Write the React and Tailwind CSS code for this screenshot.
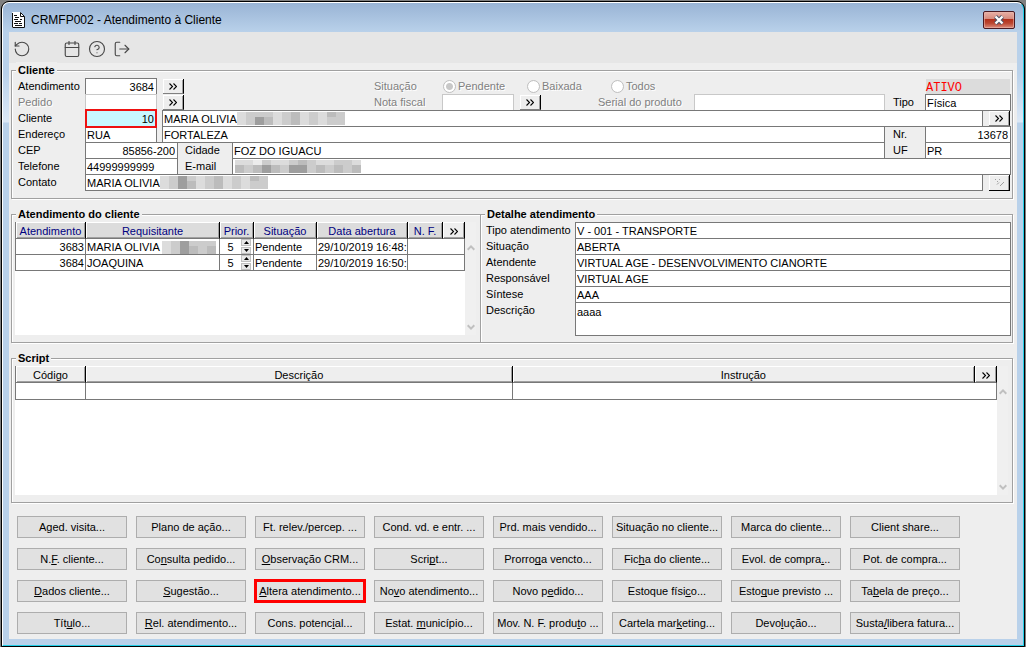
import { useState } from "react";
import { Calendar, CircleHelp, LogOut, RotateCcw } from "lucide-react";

const GROUP =
  "min-w-0 border border-[#a0a0a0] shadow-[1px_1px_0_#fff,inset_1px_1px_0_#fff]";
const LEGEND = "ml-1 h-4 bg-[#eeeeee] px-0.5 font-bold leading-4";
const FIELD = "h-[17px] min-w-0 rounded-none border border-[#787878] bg-white px-px outline-none";
const FIELD_OFF = "h-[17px] min-w-0 rounded-none border border-[#c8c8c8] bg-white px-px outline-none";
const OFF_TEXT = "text-[#808080] [text-shadow:1px_1px_0_#fff]";
const SIDE_LABEL = "w-[73px] shrink-0 pl-1.5 leading-4";

const SHADES = {
  a: "bg-[#ececec]",
  b: "bg-[#dcdcdc]",
  c: "bg-[#cccccc]",
  d: "bg-[#bcbcbc]",
  e: "bg-[#9e9e9e]",
};

// "_" marks the access key letter
const ACTIONS = [
  ["Aged. visita...", "Plano de ação...", "Ft. relev./percep. ...", "Cond. vd. e entr. ...", "Prd. mais vendido...", "Situação no cliente...", "Marca do cliente...", "Client share..."],
  ["N._F. cliente...", "Co_nsulta pedido...", "_Observação CRM...", "Scri_pt...", "Prorro_ga vencto...", "Fic_ha do cliente...", "Evol. de compra_...", "Pot. de compra..."],
  ["_Dados cliente...", "_Sugestão...", "_Altera atendimento...", "No_vo atendimento...", "Novo p_edido...", "Estoque físi_co...", "Esto_que previsto ...", "Ta_bela de preço..."],
  ["Tít_ulo...", "_Rel. atendimento...", "Cons. potenc_ial...", "Estat. _município...", "Mov. N. F. produ_to ...", "Cartela mar_keting...", "Devo_lução...", "Susta_/libera fatura..."],
];

const REQUESTS = [
  { id: 3683, name: "MARIA OLIVIA", hidden: true, priority: 5, status: "Pendente", opened: "29/10/2019 16:48:" },
  { id: 3684, name: "JOAQUINA", hidden: false, priority: 5, status: "Pendente", opened: "29/10/2019 16:50:" },
];

const DETAILS = [
  ["Tipo atendimento", "V - 001 - TRANSPORTE"],
  ["Situação", "ABERTA"],
  ["Atendente", "VIRTUAL AGE - DESENVOLVIMENTO CIANORTE"],
  ["Responsável", "VIRTUAL AGE"],
  ["Síntese", "AAA"],
];

function Chevrons({ muted }) {
  if (muted) {
    return (
      <svg width="11" height="9" viewBox="0 0 11 9" stroke="#a0a0a0" fill="none">
        <path d="M1 1.5h1M3 3.5h1M5 1.5h1M3 6.5l2-2M6 8l4-4" />
      </svg>
    );
  }
  return (
    <svg width="8" height="7" viewBox="0 0 8 7" stroke="#000" strokeWidth="1.1" fill="none">
      <path d="M.5.5l3 3-3 3M4.5.5l3 3-3 3" />
    </svg>
  );
}

function MoreButton({ label, muted }) {
  return (
    <button
      type="button"
      aria-label={label}
      disabled={muted}
      className={
        "mt-px flex w-[21px] shrink-0 items-center justify-center border-r border-b border-r-black bg-[#eeeeee] shadow-[inset_1px_1px_0_#fff,inset_-1px_0_0_#a0a0a0] " +
        (muted ? "h-4 border-b-black" : "h-[15px] border-b-[#808080]")
      }
    >
      <Chevrons muted={muted} />
    </button>
  );
}

// Blurred-out personal data: each pair is one column, upper and lower shade
function Mosaic({ pattern }) {
  return (
    <span className="flex h-[13px]" aria-hidden="true">
      {pattern.split(" ").map((pair, i) => (
        <span key={i} className="flex w-[9px] flex-col">
          <span className={"h-[5px] " + SHADES[pair[0]]} />
          <span className={"h-2 " + SHADES[pair[1]]} />
        </span>
      ))}
    </span>
  );
}

function Arrow({ up }) {
  return (
    <svg width="8" height="6" viewBox="0 0 8 6" fill="none" stroke="#c0c0c0" strokeWidth="2">
      <path d={up ? "M.7 4.7L4 1.4l3.3 3.3" : "M.7 1.3L4 4.6l3.3-3.3"} />
    </svg>
  );
}

function ScrollTrack() {
  return (
    <div className="flex w-[11px] flex-col items-center justify-between bg-[#f0f0f0] pt-[23px] pb-[5px]">
      <Arrow up />
      <Arrow />
    </div>
  );
}

function Stepper({ value, label }) {
  const [n, setN] = useState(value);
  const btn = "flex h-[7px] w-[10px] items-center justify-center border border-[#c0c0c0] bg-[#e8e8e8]";
  return (
    <div className="flex h-[15px] items-center">
      <input
        aria-label={label}
        value={n}
        onChange={(e) => setN(e.target.value)}
        className="h-[15px] w-[21px] text-center outline-none"
      />
      <span className="flex flex-col gap-px">
        <button type="button" aria-label="Aumentar" className={btn} onClick={() => setN(Number(n) + 1)}>
          <svg width="5" height="3" viewBox="0 0 5 3"><path d="M0 3L2.5 0L5 3z" /></svg>
        </button>
        <button type="button" aria-label="Diminuir" className={btn} onClick={() => setN(Number(n) - 1)}>
          <svg width="5" height="3" viewBox="0 0 5 3"><path d="M0 0L2.5 3L5 0z" /></svg>
        </button>
      </span>
    </div>
  );
}

function ActionButton({ text }) {
  const at = text.indexOf("_");
  const marked = text === "_Altera atendimento...";
  return (
    <button
      type="button"
      className={
        "h-[22px] w-[110px] whitespace-nowrap bg-[#e1e1e1] text-center " +
        (marked
          ? "border-2 border-[#ff0000] leading-[18px] outline outline-[#ff0000]"
          : "border border-[#adadad] leading-5")
      }
    >
      {at < 0 ? text : (
        <>
          {text.slice(0, at)}
          <span className="underline decoration-1 underline-offset-1 [text-decoration-skip-ink:none]">{text[at + 1]}</span>
          {text.slice(at + 2)}
        </>
      )}
    </button>
  );
}

function TitleBar() {
  return (
    <header className="flex h-[29px] items-center pt-[5px] pr-0.5 pl-[3px]">
      <svg width="13" height="16" viewBox="0 0 13 16" fill="none">
        <path d="M.5.5h8l4 4v11h-12z" fill="#fff" stroke="#fff" />
        <path d="M.5 15.5h12v-11l-4-4v4h4M.5 1v14" stroke="#111" />
        <path d="M2 3.5h3M3 5.5h4M2 7.5h4M3 9.5h6M2 11.5h4M3 13.5h7M8 7.5h2M7 11.5h3" stroke="#111" />
      </svg>
      <h1 className="ml-1.5 flex-1 text-[12px] leading-4">
        CRMFP002 - Atendimento à Cliente
      </h1>
      <button
        type="button"
        aria-label="Fechar"
        className="flex h-[18px] w-8 items-center justify-center rounded-[2px] border border-[#4a1a22] bg-[linear-gradient(#e8b0a6_0%,#d68a7c_45%,#b3301b_46%,#bb4630_70%,#dc8b7c_100%)] shadow-[inset_0_0_0_1px_#e9b5ab99]"
      >
        <svg width="12" height="10" viewBox="0 0 12 10" fill="none">
          <path d="M2.5 1.5l7 7M9.5 1.5l-7 7" stroke="#4b5468" strokeWidth="4.2" />
          <path d="M2.5 1.5l7 7M9.5 1.5l-7 7" stroke="#fff" strokeWidth="2.3" />
        </svg>
      </button>
    </header>
  );
}

function Toolbar() {
  const icon = "size-[18px] text-[#484848]";
  return (
    <nav className="flex h-[31px] items-center gap-[7px] bg-[#e6e6e6] pt-[3px] pl-1">
      <button type="button" aria-label="Atualizar" className="mr-[25px]"><RotateCcw className={icon} strokeWidth={1.5} /></button>
      <button type="button" aria-label="Agenda"><Calendar className={icon} strokeWidth={1.5} /></button>
      <button type="button" aria-label="Ajuda"><CircleHelp className={icon} strokeWidth={1.5} /></button>
      <button type="button" aria-label="Sair"><LogOut className={icon} strokeWidth={1.5} /></button>
    </nav>
  );
}

function SituationRadio({ label, checked }) {
  return (
    <label className={"flex w-[84px] items-center gap-0.5 pt-px " + OFF_TEXT}>
      <input
        type="radio"
        name="situacao"
        disabled
        defaultChecked={checked}
        className="size-[13px] appearance-none rounded-full border border-[#c0c0c0] bg-white bg-clip-padding checked:bg-[radial-gradient(#c8c8c8_3px,#fff_4px)]"
      />
      {label}
    </label>
  );
}

function ClientGroup() {
  return (
    <fieldset className={GROUP + " -mt-px pr-px pb-2"}>
      <legend className={LEGEND}>Cliente</legend>

      <div className="flex h-4">
        <label htmlFor="atendimento" className={SIDE_LABEL}>Atendimento</label>
        <input id="atendimento" defaultValue="3684" className={FIELD + " mr-1.5 w-[72px] pr-0.5 text-right"} />
        <MoreButton label="Buscar atendimento" />
        <span className={"ml-[190px] w-[68px] leading-4 " + OFF_TEXT}>Situação</span>
        <span className="flex flex-1 pl-px">
          <SituationRadio label="Pendente" checked />
          <SituationRadio label="Baixada" />
          <SituationRadio label="Todos" />
        </span>
        <output className="mt-px mr-px w-[84px] bg-[#dcdcdc] font-['Liberation_Mono',monospace] text-[12px] leading-[18px] text-[#ff0000]">
          ATIVO
        </output>
      </div>

      <div className="flex h-4">
        <label htmlFor="pedido" className={SIDE_LABEL + " " + OFF_TEXT}>Pedido</label>
        <input id="pedido" disabled className={FIELD_OFF + " mr-1.5 w-[72px]"} />
        <MoreButton label="Buscar pedido" />
        <label htmlFor="nota" className={"ml-[190px] w-[68px] leading-4 " + OFF_TEXT}>Nota fiscal</label>
        <input id="nota" disabled className={FIELD_OFF + " mr-1.5 w-[72px]"} />
        <MoreButton label="Buscar nota fiscal" />
        <label htmlFor="serial" className={"ml-[57px] w-24 leading-4 " + OFF_TEXT}>Serial do produto</label>
        <input id="serial" disabled className={FIELD_OFF + " flex-1"} />
        <label htmlFor="tipo" className="w-10 pl-2 leading-4">Tipo</label>
        <input id="tipo" defaultValue="Física" className={FIELD + " relative w-[86px]"} />
      </div>

      <div className="flex h-4">
        <label htmlFor="cliente" className={SIDE_LABEL}>Cliente</label>
        <input
          id="cliente"
          defaultValue="10"
          className="relative mr-[5px] -mt-px h-[19px] w-[72px] border-2 border-[#ee1111] bg-[#c8f8ff] pr-px text-right outline-none"
        />
        <span className="relative flex flex-1">
          <input aria-label="Nome do cliente" defaultValue="MARIA OLIVIA" className={FIELD + " flex-1"} />
          <span className="absolute top-0.5 left-[75px]">
            <Mosaic pattern="bb cc ce cd bb cc dd bb cc bb dc cc" />
          </span>
        </span>
        <span className="ml-1.5 w-[22px]"><MoreButton label="Abrir cliente" /></span>
      </div>

      <div className="flex h-4">
        <label htmlFor="endereco" className={SIDE_LABEL}>Endereço</label>
        <input id="endereco" defaultValue="RUA" className={FIELD + " mr-[5px] w-[72px]"} />
        <input aria-label="Logradouro" defaultValue="FORTALEZA" className={FIELD + " flex-1"} />
        <label htmlFor="numero" className="w-10 pl-2 leading-4">Nr.</label>
        <input id="numero" defaultValue="13678" className={FIELD + " w-[86px] pr-0.5 text-right"} />
      </div>

      <div className="flex h-4">
        <label htmlFor="cep" className={SIDE_LABEL}>CEP</label>
        <input id="cep" defaultValue="85856-200" className={FIELD + " w-[93px] pr-0.5 text-right"} />
        <label htmlFor="cidade" className="w-[54px] pl-[7px] leading-4">Cidade</label>
        <input id="cidade" defaultValue="FOZ DO IGUACU" className={FIELD + " flex-1"} />
        <label htmlFor="uf" className="w-10 pl-2 leading-4">UF</label>
        <input id="uf" defaultValue="PR" className={FIELD + " w-[86px]"} />
      </div>

      <div className="flex h-4">
        <label htmlFor="telefone" className={SIDE_LABEL}>Telefone</label>
        <input id="telefone" defaultValue="44999999999" className={FIELD + " w-[93px]"} />
        <label htmlFor="email" className="w-[54px] pl-[7px] leading-4">E-mail</label>
        <span className="relative flex flex-1">
          <input id="email" className={FIELD + " flex-1"} />
          <span className="absolute top-0.5 left-[3px]">
            <Mosaic pattern="bd bc ad ce bd bc ce de cc bd bc cd cc bd" />
          </span>
        </span>
      </div>

      <div className="flex h-4">
        <label htmlFor="contato" className={SIDE_LABEL}>Contato</label>
        <span className="relative flex flex-1">
          <input id="contato" defaultValue="MARIA OLIVIA" className={FIELD + " flex-1"} />
          <span className="absolute top-0.5 left-[75px]">
            <Mosaic pattern="bb cc ee cd bb cc dd bb cc bb dc cc" />
          </span>
        </span>
        <span className="ml-1.5 w-[22px]"><MoreButton label="Contatos" muted /></span>
      </div>
    </fieldset>
  );
}

function RequestsGroup() {
  const th = "border-r border-b border-r-black border-b-[#787878] pt-0.5 font-normal text-[#000080]";
  const face = " bg-[#dcdcdc] shadow-[inset_1px_1px_0_#fff,inset_-1px_-1px_0_#a0a0a0]";
  const td = "overflow-hidden whitespace-nowrap border-r border-b border-[#787878] px-px pt-0.5";
  return (
    <fieldset className={GROUP + " w-[470px] shrink-0"}>
      <legend className={LEGEND}>Atendimento do cliente</legend>
      <div className="mb-[7px] ml-[3px] flex h-[113px]">
        <div className="w-[450px] bg-white">
          <table className="w-full table-fixed border-separate border-spacing-0 border-l border-[#787878] leading-[13px]">
            <colgroup>
              <col className="w-[70px]" />
              <col className="w-[134px]" />
              <col className="w-[34px]" />
              <col className="w-[63px]" />
              <col className="w-[91px]" />
              <col className="w-[35px]" />
              <col />
            </colgroup>
            <thead>
              <tr className="h-[17px]">
                <th className={th + face}>Atendimento</th>
                <th className={th + face}>Requisitante</th>
                <th className={th + face}>Prior.</th>
                <th className={th + face}>Situação</th>
                <th className={th + face}>Data abertura</th>
                <th className={th + face}>N. F.</th>
                <th className={th + " bg-[#eeeeee] shadow-[inset_1px_1px_0_#fff,inset_-1px_-1px_0_#a0a0a0]"}>
                  <button type="button" aria-label="Mais colunas" className="flex h-3 w-full items-center justify-center">
                    <Chevrons />
                  </button>
                </th>
              </tr>
            </thead>
            <tbody>
              {REQUESTS.map((r) => (
                <tr key={r.id} className="h-4">
                  <td className={td + " text-right"}>{r.id}</td>
                  <td className={td}>
                    <span className="flex h-[13px] items-center gap-0.5">
                      {r.name}
                      {r.hidden && <Mosaic pattern="bb cc ee cd cc cd" />}
                    </span>
                  </td>
                  <td className="border-r border-b border-[#787878] p-0">
                    <Stepper value={r.priority} label={"Prioridade " + r.id} />
                  </td>
                  <td className={td}>{r.status}</td>
                  <td className={td}>{r.opened}</td>
                  <td className={td} colSpan={2} />
                </tr>
              ))}
            </tbody>
          </table>
        </div>
        <ScrollTrack />
      </div>
    </fieldset>
  );
}

function DetailGroup() {
  const label = "w-[94px] shrink-0 pl-[5px] leading-4";
  return (
    <fieldset className={GROUP + " -ml-px flex-1 pr-px"}>
      <legend className={LEGEND}>Detalhe atendimento</legend>
      {DETAILS.map(([name, value], i) => (
        <div key={name} className="flex h-4">
          <label htmlFor={"det" + i} className={label}>{name}</label>
          <input id={"det" + i} defaultValue={value} className={FIELD + " flex-1"} />
        </div>
      ))}
      <div className="flex">
        <label htmlFor="descricao" className={label}>Descrição</label>
        <textarea
          id="descricao"
          defaultValue="aaaa"
          className="h-[34px] flex-1 resize-none border border-[#787878] bg-white px-px pt-px leading-4 outline-none"
        />
      </div>
    </fieldset>
  );
}

function ScriptGroup() {
  const th = "border-r border-b border-r-black border-b-[#787878] bg-[#eeeeee] pt-0.5 font-normal shadow-[inset_1px_1px_0_#fff,inset_-1px_-1px_0_#a0a0a0]";
  const td = "border-r border-b border-[#787878]";
  return (
    <fieldset className={GROUP + " mt-[7px]"}>
      <legend className={LEGEND}>Script</legend>
      <div className="mr-1 mb-[7px] ml-[3px] flex h-[129px]">
        <div className="flex-1 bg-white">
          <table className="w-full table-fixed border-separate border-spacing-0 border-l border-[#787878] leading-[13px]">
            <colgroup>
              <col className="w-[70px]" />
              <col className="w-[48%]" />
              <col className="w-[52%]" />
              <col className="w-[22px]" />
            </colgroup>
            <thead>
              <tr className="h-[17px]">
                <th className={th}>Código</th>
                <th className={th}>Descrição</th>
                <th className={th}>Instrução</th>
                <th className={th}>
                  <button type="button" aria-label="Mais colunas" className="flex h-3 w-full items-center justify-center">
                    <Chevrons />
                  </button>
                </th>
              </tr>
            </thead>
            <tbody>
              <tr className="h-[17px]">
                <td className={td} />
                <td className={td} />
                <td className={td} colSpan={2} />
              </tr>
            </tbody>
          </table>
        </div>
        <ScrollTrack />
      </div>
    </fieldset>
  );
}

export default function App() {
  return (
    <div className="flex min-h-screen bg-[#808080] px-px pt-px font-['Liberation_Sans',Arial,sans-serif] text-[11px] text-black">
      <div className="flex flex-1 flex-col rounded-t-lg border border-black bg-black">
        <div className="flex flex-1 flex-col rounded-t-[7px] border border-t-white border-r-[#22cfe8] border-b-[#22cfe8] border-l-white bg-[linear-gradient(#99b4d5_0px,#b9d1ea_29px,#b9d1ea_70px,#dce8f6_119px,#b9d1ea_120px)] px-1.5 pb-1.5">
          <TitleBar />
          <main className="flex-1 bg-[#eeeeee]">
            <Toolbar />
            <div className="pr-1 pl-0.5">
              <ClientGroup />
              <div className="mt-[7px] flex">
                <RequestsGroup />
                <DetailGroup />
              </div>
              <ScriptGroup />
              <div className="mt-[13px] flex flex-col gap-2.5 pl-1.5">
                {ACTIONS.map((row) => (
                  <div key={row[0]} className="flex gap-[9px]">
                    {row.map((text) => <ActionButton key={text} text={text} />)}
                  </div>
                ))}
              </div>
            </div>
          </main>
        </div>
      </div>
    </div>
  );
}
